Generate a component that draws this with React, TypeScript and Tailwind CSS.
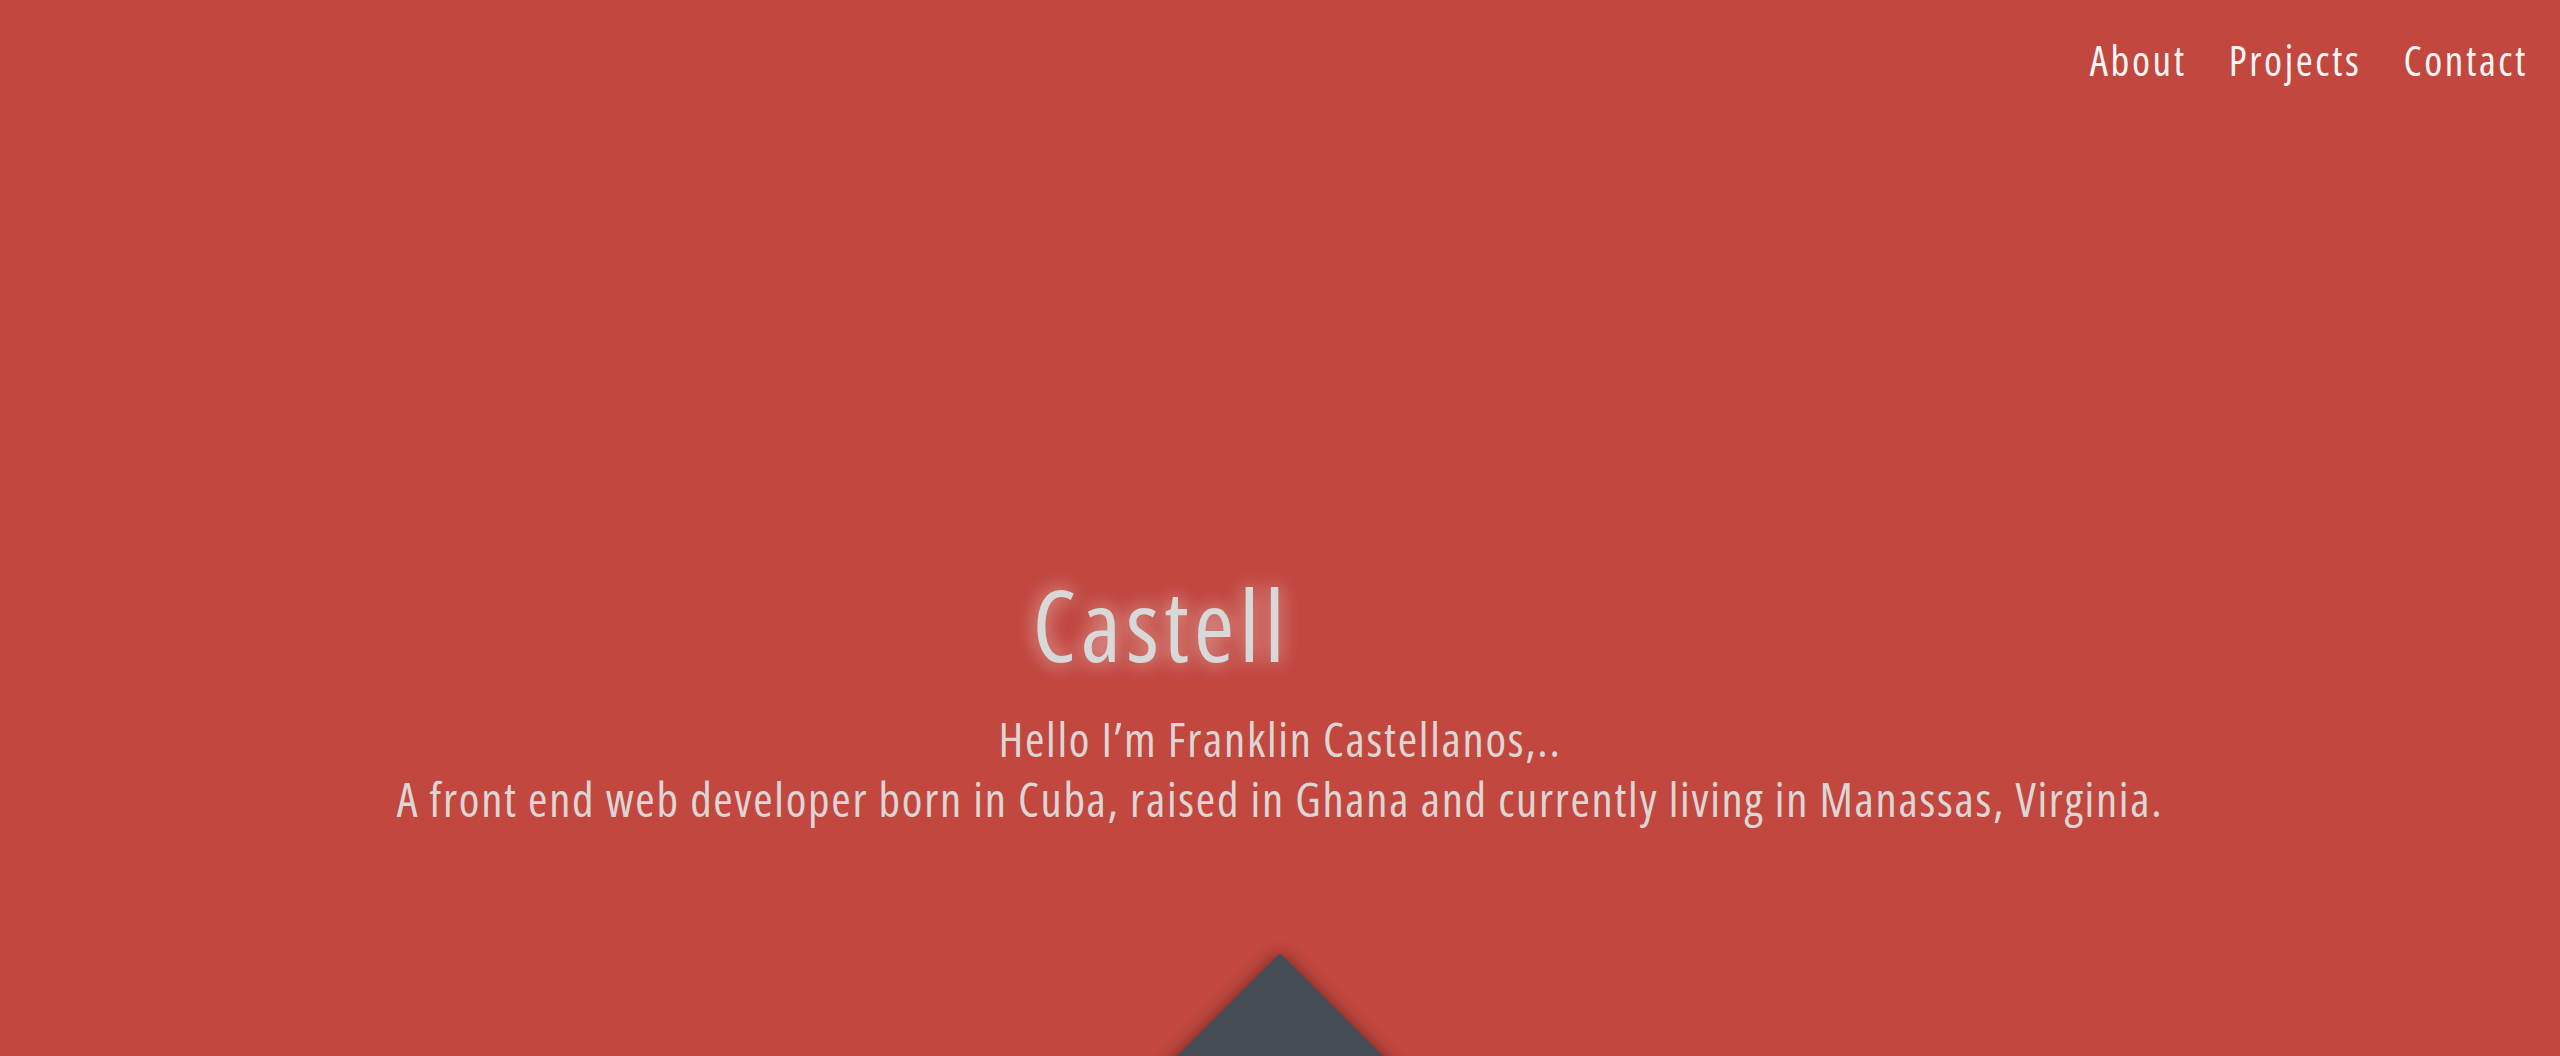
const NAV = ["About", "Projects", "Contact"];

export default function App() {
  return (
    <section className="relative w-full h-[1056px] overflow-hidden bg-[#c1473f] font-['Open_Sans',sans-serif] [font-stretch:75%]">
      {/* Nav */}
      <nav className="flex justify-end gap-[42px] pt-[40px] pr-[32px]">
        {NAV.map((item) => (
          <a key={item} href={`#${item.toLowerCase()}`} className="text-[41px] leading-none tracking-[2.6px] text-[#fef6f4]">
            {item}
          </a>
        ))}
      </nav>

      {/* Intro */}
      <div className="flex flex-col items-center mt-[494px]">
        <h1 className="mr-[238px] text-[98px] leading-none tracking-[5px] text-[#d8d8d8] [text-shadow:0_0_20px_rgba(255,255,255,0.65)]">
          Castell
        </h1>
        <p className="mt-[36px] text-center text-[47px] leading-[60px] tracking-[1.7px] text-[#ddd5d4]">
          Hello I’m Franklin Castellanos,..
          <br />
          A front end web developer born in Cuba, raised in Ghana and currently living in Manassas, Virginia.
        </p>
      </div>

      {/* Divider arrow */}
      <div className="absolute left-1/2 bottom-[-139px] w-[200px] h-[200px] -translate-x-1/2 rotate-45 bg-[#444d56] shadow-[0_0_16px_rgba(0,0,0,0.45)]" />
    </section>
  );
}
